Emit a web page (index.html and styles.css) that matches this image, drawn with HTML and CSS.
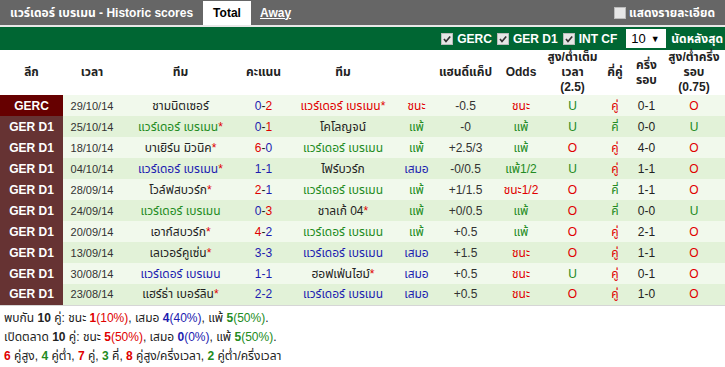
FILE: index.html
```html
<!DOCTYPE html>
<html lang="th">
<head>
<meta charset="utf-8">
<title>Historic scores</title>
<link rel="stylesheet" href="styles.css">
</head>
<body>
<div class="topbar">
  <div class="topbar-left">
    <span class="title">แวร์เดอร์ เบรเมน - Historic scores</span>
    <span class="tab tab-active">Total</span>
    <span class="tab tab-link">Away</span>
  </div>
  <label class="detail"><span class="box"></span>แสดงรายละเอียด</label>
</div>
<div class="sep"></div>
<div class="filterbar">
  <label class="filter"><span class="box checked"><svg viewBox="0 0 12 12" width="12" height="12"><path d="M3 6 L5 8.5 L9.2 3.5" fill="none" stroke="#333" stroke-width="1.7"/></svg></span>GERC</label>
  <label class="filter"><span class="box checked"><svg viewBox="0 0 12 12" width="12" height="12"><path d="M3 6 L5 8.5 L9.2 3.5" fill="none" stroke="#333" stroke-width="1.7"/></svg></span>GER D1</label>
  <label class="filter"><span class="box checked"><svg viewBox="0 0 12 12" width="12" height="12"><path d="M3 6 L5 8.5 L9.2 3.5" fill="none" stroke="#333" stroke-width="1.7"/></svg></span>INT CF</label>
  <span class="select">10 <span class="arrow">▼</span></span>
  <span class="last">นัดหลังสุด</span>
</div>
<table class="scores">
  <colgroup>
    <col style="width:63px"><col style="width:58px"><col style="width:119px"><col style="width:47px">
    <col style="width:112px"><col style="width:35px"><col style="width:63px"><col style="width:48px">
    <col style="width:55px"><col style="width:30px"><col style="width:33px"><col style="width:62px">
  </colgroup>
  <thead>
    <tr>
      <th>ลีก</th><th>เวลา</th><th>ทีม</th><th>คะแนน</th><th>ทีม</th><th></th>
      <th>แฮนดิ์แค็ป</th><th>Odds</th><th>สูง/ต่ำเต็ม<br>เวลา<br>(2.5)</th><th>คี่คู่</th>
      <th>ครึ่ง<br>รอบ</th><th>สูง/ต่ำครึ่ง<br>รอบ<br>(0.75)</th>
    </tr>
  </thead>
  <tbody>
    <tr class="odd">
      <td class="lg lg-cup">GERC</td><td class="dt">29/10/14</td><td>ชามนิตเซอร์</td>
      <td class="sc"><span class="b">0</span>-<span class="r">2</span></td>
      <td class="r">แวร์เดอร์ เบรเมน<span class="r">*</span></td><td class="r">ชนะ</td><td class="hc">-0.5</td>
      <td class="r">ชนะ</td><td class="g">U</td><td class="r">คู่</td><td>0-1</td><td class="r">O</td>
    </tr>
    <tr class="even">
      <td class="lg">GER D1</td><td class="dt">25/10/14</td><td class="g">แวร์เดอร์ เบรเมน<span class="r">*</span></td>
      <td class="sc"><span class="b">0</span>-<span class="r">1</span></td>
      <td>โคโลญจน์</td><td class="g">แพ้</td><td class="hc">-0</td>
      <td class="g">แพ้</td><td class="g">U</td><td class="g">คี่</td><td>0-0</td><td class="g">U</td>
    </tr>
    <tr class="odd">
      <td class="lg">GER D1</td><td class="dt">18/10/14</td><td>บาเยิร์น มิวนิค<span class="r">*</span></td>
      <td class="sc"><span class="r">6</span>-<span class="b">0</span></td>
      <td class="g">แวร์เดอร์ เบรเมน</td><td class="g">แพ้</td><td class="hc">+2.5/3</td>
      <td class="g">แพ้</td><td class="r">O</td><td class="r">คู่</td><td>4-0</td><td class="r">O</td>
    </tr>
    <tr class="even">
      <td class="lg">GER D1</td><td class="dt">04/10/14</td><td class="b">แวร์เดอร์ เบรเมน<span class="r">*</span></td>
      <td class="sc b">1-1</td>
      <td>ไฟร์บวร์ก</td><td class="b">เสมอ</td><td class="hc">-0/0.5</td>
      <td class="g">แพ้1/2</td><td class="g">U</td><td class="r">คู่</td><td>1-1</td><td class="r">O</td>
    </tr>
    <tr class="odd">
      <td class="lg">GER D1</td><td class="dt">28/09/14</td><td>โวล์ฟสบวร์ก<span class="r">*</span></td>
      <td class="sc"><span class="r">2</span>-<span class="b">1</span></td>
      <td class="g">แวร์เดอร์ เบรเมน</td><td class="g">แพ้</td><td class="hc">+1/1.5</td>
      <td class="r">ชนะ1/2</td><td class="r">O</td><td class="g">คี่</td><td>1-1</td><td class="r">O</td>
    </tr>
    <tr class="even">
      <td class="lg">GER D1</td><td class="dt">24/09/14</td><td class="g">แวร์เดอร์ เบรเมน</td>
      <td class="sc"><span class="b">0</span>-<span class="r">3</span></td>
      <td>ชาลเก้ 04<span class="r">*</span></td><td class="g">แพ้</td><td class="hc">+0/0.5</td>
      <td class="g">แพ้</td><td class="r">O</td><td class="g">คี่</td><td>0-0</td><td class="g">U</td>
    </tr>
    <tr class="odd">
      <td class="lg">GER D1</td><td class="dt">20/09/14</td><td>เอาก์สบวร์ก<span class="r">*</span></td>
      <td class="sc"><span class="r">4</span>-<span class="b">2</span></td>
      <td class="g">แวร์เดอร์ เบรเมน</td><td class="g">แพ้</td><td class="hc">+0.5</td>
      <td class="g">แพ้</td><td class="r">O</td><td class="r">คู่</td><td>2-1</td><td class="r">O</td>
    </tr>
    <tr class="even">
      <td class="lg">GER D1</td><td class="dt">13/09/14</td><td>เลเวอร์คูเซ่น<span class="r">*</span></td>
      <td class="sc b">3-3</td>
      <td class="b">แวร์เดอร์ เบรเมน</td><td class="b">เสมอ</td><td class="hc">+1.5</td>
      <td class="r">ชนะ</td><td class="r">O</td><td class="r">คู่</td><td>1-1</td><td class="r">O</td>
    </tr>
    <tr class="odd">
      <td class="lg">GER D1</td><td class="dt">30/08/14</td><td class="b">แวร์เดอร์ เบรเมน</td>
      <td class="sc b">1-1</td>
      <td>ฮอฟเฟ่นไฮม์<span class="r">*</span></td><td class="b">เสมอ</td><td class="hc">+0.5</td>
      <td class="r">ชนะ</td><td class="g">U</td><td class="r">คู่</td><td>0-1</td><td class="r">O</td>
    </tr>
    <tr class="even">
      <td class="lg">GER D1</td><td class="dt">23/08/14</td><td>แฮร์ธ่า เบอร์ลิน<span class="r">*</span></td>
      <td class="sc b">2-2</td>
      <td class="b">แวร์เดอร์ เบรเมน</td><td class="b">เสมอ</td><td class="hc">+0.5</td>
      <td class="r">ชนะ</td><td class="r">O</td><td class="r">คู่</td><td>1-0</td><td class="r">O</td>
    </tr>
  </tbody>
</table>
<div class="summary">
  <p>พบกัน <b>10</b> คู่: ชนะ <span class="r"><b>1</b>(10%)</span>, เสมอ <span class="b"><b>4</b>(40%)</span>, แพ้ <span class="g"><b>5</b>(50%)</span>.</p>
  <p>เปิดตลาด <b>10</b> คู่: ชนะ <span class="r"><b>5</b>(50%)</span>, เสมอ <span class="b"><b>0</b>(0%)</span>, แพ้ <span class="g"><b>5</b>(50%)</span>.</p>
  <p><b class="r">6</b> คู่สูง, <b class="g">4</b> คู่ต่ำ, <b class="r">7</b> คู่, <b class="g">3</b> คี่, <b class="r">8</b> คู่สูง/ครึ่งเวลา, <b class="g">2</b> คู่ต่ำ/ครึ่งเวลา</p>
</div>
</body>
</html>
```
FILE: styles.css
```css
* { box-sizing: border-box; }
html, body { margin: 0; padding: 0; background: #fff; }
body {
  font-family: "Liberation Sans", Arial, "Noto Sans Thai", Loma, sans-serif;
  font-size: 12px;
  color: #222;
  width: 725px;
}
.topbar {
  height: 25px;
  background: #666666;
  display: flex;
  justify-content: space-between;
  align-items: stretch;
  color: #fff;
  font-weight: bold;
}
.topbar-left { display: flex; align-items: stretch; }
.title { padding-left: 10px; display: flex; align-items: center; width: 203px; white-space: nowrap; }
.tab { display: flex; align-items: center; padding: 0 9px; }
.tab-active { background: #fff; color: #000; margin-top: 1px; width: 48px; justify-content: center; }
.tab-link { text-decoration: underline; }
.detail { display: flex; align-items: center; padding-right: 10px; white-space: nowrap; }
.box {
  display: inline-block;
  flex-shrink: 0;
  width: 12px; height: 12px;
  background: #e6e6e6;
  border: 1px solid #bbb;
  margin-right: 3px;
  position: relative;
}
.box svg { position: absolute; left: -1px; top: -1px; }
.sep { height: 2px; background: #e8e8e8; }
.filterbar {
  height: 23px;
  background: #006633;
  display: flex;
  justify-content: flex-end;
  align-items: center;
  color: #fff;
  font-weight: bold;
  padding-right: 2px;
  white-space: nowrap;
}
.filter { display: flex; align-items: center; margin-left: 5px; }
.filter .box { margin-right: 4px; }
.select {
  flex-shrink: 0;
  background: #fff;
  color: #000;
  font-weight: normal;
  height: 19px;
  width: 40px;
  margin-left: 9px;
  display: flex;
  align-items: center;
  padding-left: 5px;
  font-size: 13px;
}
.select .arrow { font-size: 9px; margin-left: 5px; }
.last { margin-left: 5px; flex-shrink: 0; }
.scores {
  border-collapse: collapse;
  table-layout: fixed;
  width: 725px;
  border-bottom: 1px solid #d6d6d6;
}
.scores th {
  height: 45px;
  font-weight: bold;
  line-height: 15px;
  text-align: center;
  vertical-align: middle;
  padding: 0;
  color: #222;
  white-space: nowrap;
}
.scores td {
  height: 21px;
  padding: 0;
  text-align: center;
  white-space: nowrap;
  color: #222;
}
tr.odd td { background: #f1f9ec; }
tr.even td { background: #e2f2d8; }
.scores td.lg {
  background: #663333;
  color: #fff;
  font-weight: bold;
  font-size: 12px;
}
.scores td.lg-cup { background: #660000; }
.scores td.dt { font-size: 11px; color: #333; }
.scores td.hc { color: #333; }
.r, .scores td.r { color: #e00000; }
.g, .scores td.g { color: #228b22; }
.b, .scores td.b { color: #1c1cb0; }
.summary { padding-top: 3px; padding-left: 4px; }
.summary p { margin: 0; line-height: 19px; }
.summary b { font-weight: bold; }
```
